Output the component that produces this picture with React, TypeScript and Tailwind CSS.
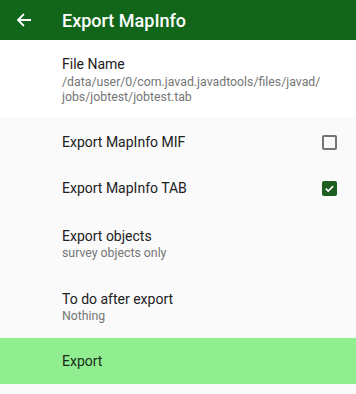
import React, { useState } from "react";

const ArrowLeft = () => (
  <svg width="16" height="16" viewBox="0 0 16 16" fill="none">
    <path d="M15 8H2M8 2L2 8l6 6" stroke="white" strokeWidth="1.8" />
  </svg>
);

const CheckBox: React.FC<{ checked: boolean; onClick: () => void }> = ({ checked, onClick }) =>
  checked ? (
    <button onClick={onClick} className="w-[15px] h-[15px] rounded-[2px] bg-[#1b5e20] flex items-center justify-center">
      <svg width="11" height="11" viewBox="0 0 12 12" fill="none">
        <path d="M2 6.2l2.6 2.6L10 3.4" stroke="white" strokeWidth="1.8" />
      </svg>
    </button>
  ) : (
    <button onClick={onClick} className="w-[15px] h-[15px] rounded-[2px] border-2 border-[#757575]" />
  );

export default function App() {
  const [mif, setMif] = useState(false);
  const [tab, setTab] = useState(true);

  return (
    <div className="w-[356px] h-[394px] bg-[#fafafa] font-['Roboto',sans-serif] overflow-hidden">
      <div className="h-10 bg-[#12661a] flex items-center">
        <div className="w-[62px] pl-[16px] flex items-center">
          <ArrowLeft />
        </div>
        <h1 className="text-white text-[18px] font-medium">Export MapInfo</h1>
      </div>

      <div className="bg-white h-[77px] pl-[62px] pt-[14px]">
        <p className="text-[14px] text-[#212121] leading-[20px]">File Name</p>
        <p className="text-[12.3px] text-[#757575] leading-[15px] mt-[1px]">
          /data/user/0/com.javad.javadtools/files/javad/
          <br />
          jobs/jobtest/jobtest.tab
        </p>
      </div>

      <div className="h-[48px] flex items-center justify-between pl-[62px] pr-[19px] mt-[1px]">
        <span className="text-[14px] text-[#212121]">Export MapInfo MIF</span>
        <CheckBox checked={mif} onClick={() => setMif(!mif)} />
      </div>
      <div className="h-[45px] flex items-center justify-between pl-[62px] pr-[19px]">
        <span className="text-[14px] text-[#212121]">Export MapInfo TAB</span>
        <CheckBox checked={tab} onClick={() => setTab(!tab)} />
      </div>

      <div className="h-[63px] pl-[62px] pt-[16px]">
        <p className="text-[14px] text-[#212121] leading-[19px]">Export objects</p>
        <p className="text-[12.3px] text-[#757575] leading-[15px]">survey objects only</p>
      </div>
      <div className="h-[64px] pl-[62px] pt-[16px]">
        <p className="text-[14px] text-[#212121] leading-[19px]">To do after export</p>
        <p className="text-[12.3px] text-[#757575] leading-[15px]">Nothing</p>
      </div>

      <button className="w-full h-[46px] bg-[#90ee90] flex items-center pl-[62px] text-[14px] text-[#1a2a1a]">
        Export
      </button>
    </div>
  );
}
